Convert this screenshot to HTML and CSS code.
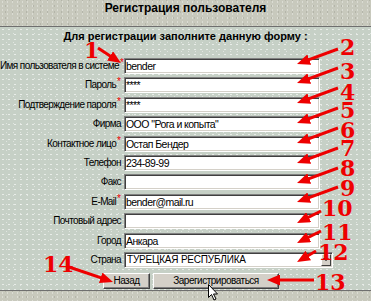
FILE: index.html
```html
<!DOCTYPE html>
<html>
<head>
  <meta charset="UTF-8">
  <title>Регистрация пользователя</title>
  <link rel="stylesheet" href="styles.css">
</head>
<body>
  <div class="page">
    <div class="header">
      <h1 class="title">Регистрация пользователя</h1>
    </div>

    <div class="main">
      <h2 class="subtitle">Для регистрации заполните данную форму :</h2>

      <form class="reg-form">
        <label class="field-label">Имя пользователя в системе<span class="req">*</span></label>
        <input class="field" type="text" value="bender">

        <label class="field-label">Пароль<span class="req">*</span></label>
        <input class="field" type="text" value="****">

        <label class="field-label">Подтверждение пароля<span class="req">*</span></label>
        <input class="field" type="text" value="****">

        <label class="field-label">Фирма</label>
        <input class="field" type="text" value="ООО &quot;Рога и копыта&quot;">

        <label class="field-label">Контактное лицо<span class="req">*</span></label>
        <input class="field" type="text" value="Остап Бендер">

        <label class="field-label">Телефон</label>
        <input class="field" type="text" value="234-89-99">

        <label class="field-label">Факс</label>
        <input class="field" type="text" value="">

        <label class="field-label">E-Mail<span class="req">*</span></label>
        <input class="field" type="text" value="bender@mail.ru">

        <label class="field-label">Почтовый адрес</label>
        <input class="field" type="text" value="">

        <label class="field-label">Город</label>
        <input class="field" type="text" value="Анкара">

        <label class="field-label">Страна</label>
        <div class="select-box">
          <select class="select">
            <option selected>ТУРЕЦКАЯ РЕСПУБЛИКА</option>
          </select>
          <span class="drop-btn"></span>
        </div>
      </form>

      <div class="actions">
        <button class="btn btn-back" type="button">Назад</button>
        <button class="btn btn-submit" type="button">Зарегистрироваться</button>
      </div>
    </div>

    <div class="footer"></div>

    <!-- red callouts drawn over the form -->
    <svg class="annotations" width="371" height="301" viewBox="0 0 371 301">
      <defs>
        <marker id="head" markerUnits="userSpaceOnUse" markerWidth="13" markerHeight="11" refX="6" refY="5.5" orient="auto">
          <path d="M0,0 L13,5.5 L0,11 Z" fill="#ee0000"/>
        </marker>
      </defs>
      <g class="arrow-lines" stroke="#ee0000" stroke-width="3" marker-end="url(#head)">
        <line x1="98" y1="48" x2="115.1" y2="59.2"/>
        <line x1="338" y1="49" x2="303.6" y2="61.6"/>
        <line x1="338" y1="68" x2="303.6" y2="80.6"/>
        <line x1="338" y1="88" x2="303.6" y2="100.6"/>
        <line x1="338" y1="108" x2="303.6" y2="120.6"/>
        <line x1="338" y1="128" x2="303.6" y2="140.6"/>
        <line x1="338" y1="148" x2="303.6" y2="160.6"/>
        <line x1="338" y1="168" x2="303.6" y2="180.6"/>
        <line x1="338" y1="187" x2="303.6" y2="199.6"/>
        <line x1="321" y1="211" x2="303.3" y2="219.9"/>
        <line x1="321" y1="231" x2="303.3" y2="239.9"/>
        <line x1="316" y1="251" x2="303.1" y2="258.5"/>
        <line x1="314" y1="280" x2="274" y2="280"/>
        <line x1="69" y1="267" x2="106.4" y2="279.7"/>
      </g>
      <g class="marks">
        <text x="84" y="58">1</text>
        <text x="340" y="55">2</text>
        <text x="340" y="79">3</text>
        <text x="340" y="100">4</text>
        <text x="340" y="118">5</text>
        <text x="340" y="138">6</text>
        <text x="340" y="156">7</text>
        <text x="340" y="176">8</text>
        <text x="340" y="196">9</text>
        <text x="322" y="216">10</text>
        <text x="322" y="240">11</text>
        <text x="318" y="260">12</text>
        <text x="315" y="290">13</text>
        <text x="43" y="272">14</text>
      </g>
      <path class="cursor" transform="translate(208.5,284.5)" d="M0,0 L0,13 L3,10 L5.5,15.5 L7.5,14.5 L5,9.5 L9,9.5 Z"/>
    </svg>
  </div>
</body>
</html>
```

FILE: styles.css
```css
:root {
  --bg-main: #c6d0c6;
  --bg-band: #c8c9bd;
  --line-dark: #6f6f6f;
  --mark-red: #ee0000;
  --btn-face: #d4d0c8;
}

* {
  box-sizing: border-box;
}

body {
  margin: 0;
  width: 371px;
  height: 301px;
  overflow: hidden;
  font-family: "Liberation Sans", Arial, sans-serif;
  color: #000;
  background-color: var(--bg-main);
}

.page {
  position: relative;
  width: 371px;
  height: 301px;
}

/* Top and bottom bands */
.header,
.footer {
  background-color: var(--bg-band);
  background-image:
    radial-gradient(circle, rgba(255,255,255,0.35) 0.6px, transparent 1px),
    radial-gradient(circle, rgba(120,120,110,0.25) 0.6px, transparent 1px);
  background-size: 5px 4px, 7px 6px;
  background-position: 0 0, 2px 3px;
}

.header {
  height: 27px;
  border-bottom: 1px solid var(--line-dark);
  text-align: center;
}

.title {
  margin: 0;
  padding-top: 1px;
  font-size: 12px;
  line-height: 14px;
  font-weight: bold;
}

.footer {
  height: 11px;
  border-top: 1px solid var(--line-dark);
}

/* Speckled main area */
.main {
  height: 263px;
  background-color: var(--bg-main);
  background-image:
    radial-gradient(circle, rgba(255,255,255,0.6) 0.6px, transparent 1px),
    radial-gradient(circle, rgba(255,255,255,0.45) 0.6px, transparent 1px);
  background-size: 6px 5px, 7px 9px;
  background-position: 0 0, 3px 2px;
}

.subtitle {
  margin: 0;
  padding-top: 3px;
  font-size: 11px;
  line-height: 13px;
  font-weight: bold;
  text-align: center;
}

/* Form rows */
.reg-form {
  display: grid;
  grid-template-columns: 121px 196px;
  grid-auto-rows: 16px;
  column-gap: 3px;
  row-gap: 3.4px;
  align-items: center;
  margin: 15px 0 0;
}

.field-label {
  font-size: 10px;
  letter-spacing: -0.6px;
  line-height: 16px;
  text-align: right;
  white-space: nowrap;
}

.req {
  color: var(--mark-red);
  font-size: 10px;
  line-height: 0;
  vertical-align: 3px;
  margin-left: 1px;
  letter-spacing: 0;
}

.field {
  width: 196px;
  height: 16px;
  margin: 0;
  padding: 0 1px;
  border: 1px solid;
  border-color: #808080 #ffffff #ffffff #808080;
  box-shadow: inset 1px 1px #404040, inset -1px -1px #d4d0c8;
  background: #fff;
  font-family: inherit;
  font-size: 10.5px;
  letter-spacing: -0.55px;
  color: #000;
  outline: none;
}

/* Country dropdown */
.select-box {
  display: flex;
  width: 209px;
  height: 16px;
  padding: 1px;
  border: 1px solid;
  border-color: #808080 #ffffff #ffffff #808080;
  box-shadow: inset 1px 1px #404040, inset -1px -1px #d4d0c8;
  background: #fff;
}

.select {
  flex: 1;
  min-width: 0;
  height: 12px;
  margin: 0;
  padding: 0 0 0 1px;
  border: 0;
  background: transparent;
  font-family: inherit;
  font-size: 10px;
  letter-spacing: -0.2px;
  line-height: 12px;
  color: #000;
  appearance: none;
  outline: none;
}

.drop-btn {
  display: flex;
  align-items: center;
  justify-content: center;
  width: 10px;
  height: 12px;
  background: var(--btn-face);
  border: 1px solid;
  border-color: #fff #404040 #404040 #fff;
}

.drop-btn::after {
  content: "";
  border-left: 3px solid transparent;
  border-right: 3px solid transparent;
  border-top: 3px solid #000;
}

/* Buttons */
.actions {
  display: flex;
  gap: 3px;
  padding-left: 103px;
  margin-top: 5px;
}

.btn {
  height: 16px;
  padding: 0;
  background: var(--btn-face);
  border: 1px solid;
  border-color: #fff #404040 #404040 #fff;
  box-shadow: inset -1px -1px #808080;
  font-family: inherit;
  font-size: 10px;
  letter-spacing: -0.5px;
  color: #000;
}

.btn-back {
  width: 47px;
}

.btn-submit {
  width: 126px;
}

/* Overlay callouts */
.annotations {
  position: absolute;
  top: 0;
  left: 0;
  pointer-events: none;
}

.marks text {
  font-family: "DejaVu Serif", "Liberation Serif", serif;
  font-size: 22px;
  font-weight: bold;
  fill: var(--mark-red);
}

.cursor {
  fill: #fff;
  stroke: #000;
  stroke-width: 1;
  stroke-linejoin: round;
}
```
